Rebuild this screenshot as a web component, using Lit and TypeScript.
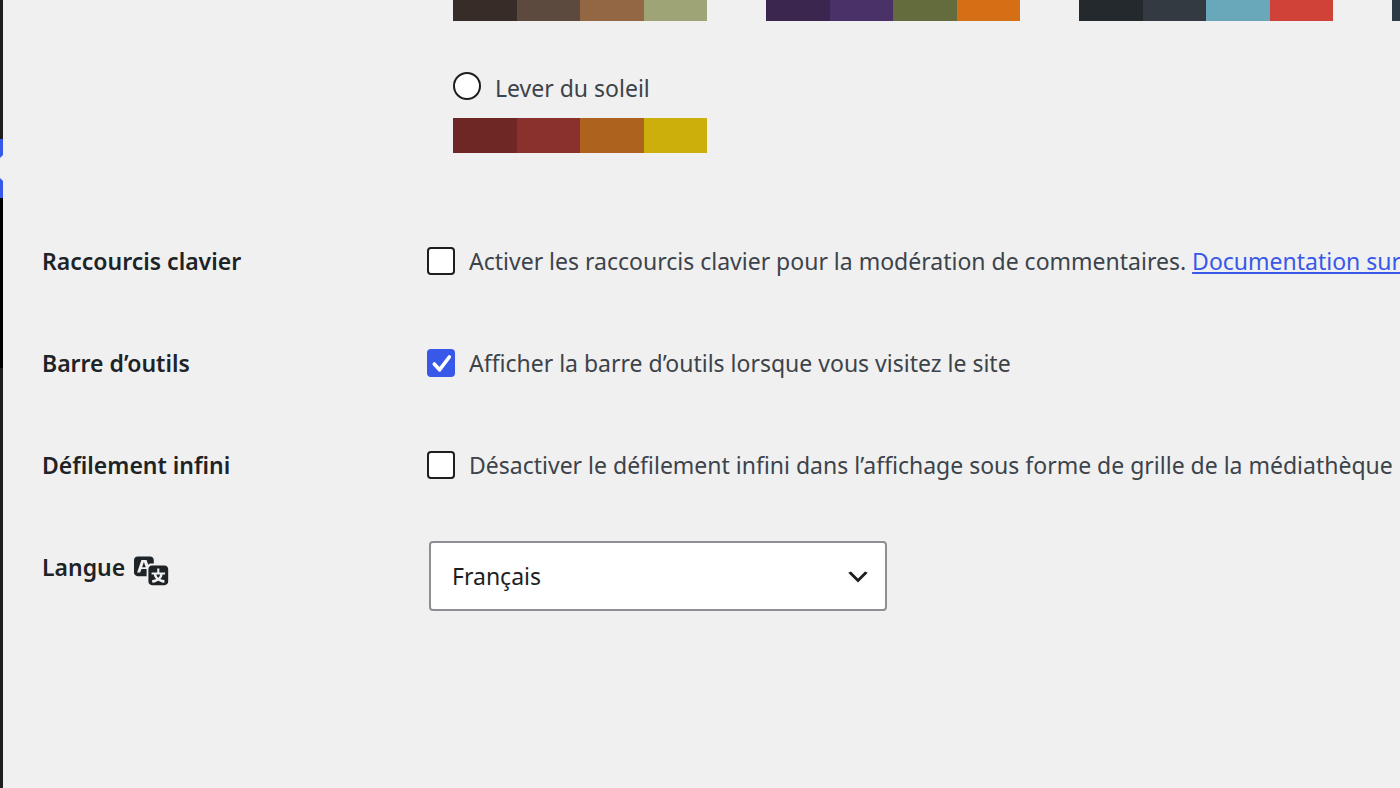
import { LitElement, html, css, svg } from "lit";
import { customElement } from "lit/decorators.js";
import { styleMap } from "lit/directives/style-map.js";

const PALETTES: string[][] = [
  ["#382c28", "#5b4a3d", "#946744", "#9ea476"],
  ["#3a264f", "#4a3268", "#646c3d", "#d46f15"],
  ["#23292c", "#333a42", "#69a7ba", "#d04238"],
  ["#2c3b45", "#738e96", "#9ebaa0", "#aa9d88"],
];
const SUNRISE = ["#6e2724", "#8a302d", "#ad621d", "#ccaf0b"];

const swatches = (colors: string[]) => html`
  <div class="palette">
    ${colors.map((c) => html`<span style=${styleMap({ backgroundColor: c })}></span>`)}
  </div>
`;

const translationIcon = svg`<path fill="currentColor" d="M11 7H9.49c-.63 0-1.25.3-1.59.7L7 5H4.13l-2.39 7h1.69l.74-2H7v4H2c-1.1 0-2-.9-2-2V5c0-1.1.9-2 2-2h7c1.1 0 2 .9 2 2v2zM6.51 9H4.49l1-2.93zM10 8h7c1.1 0 2 .9 2 2v7c0 1.1-.9 2-2 2h-7c-1.1 0-2-.9-2-2v-7c0-1.1.9-2 2-2zm7.25 5v-1.08h-3.17V9.75h-1.16v2.17H9.75V13h1.28c.11.85.56 1.85 1.28 2.62-.87.36-1.89.62-2.31.62-.01.02.22.97.2 1.46.84 0 2.21-.5 3.28-1.15 1.09.65 2.48 1.15 3.34 1.15-.02-.49.2-1.44.2-1.46-.43 0-1.49-.27-2.38-.63.7-.77 1.14-1.77 1.25-2.61h1.36zm-3.81 1.93c-.5-.46-.85-1.13-1.01-1.93h2.09c-.17.8-.51 1.47-1 1.93l-.04.03s-.03-.02-.04-.03z"/>`;

@customElement("app-root")
export class AppRoot extends LitElement {
  static styles = css`
    :host {
      display: flex;
      height: 100vh;
      overflow: hidden;
      background: #f0f0f0;
      color: #3c434a;
      font: 23px/36px "Noto Sans", "Open Sans", sans-serif;
    }
    * {
      box-sizing: border-box;
    }
    .menu {
      flex: none;
      width: 3px;
      display: flex;
      flex-direction: column;
      background: #1e1e1e;
    }
    .menu-top {
      height: 139px;
    }
    .menu-current {
      position: relative;
      height: 59px;
      background: #3858e9;
    }
    .menu-current svg {
      position: absolute;
      top: 16px;
      right: 0;
      width: 3px;
      height: 26px;
    }
    .submenu {
      height: 170px;
      background: #000;
    }
    .content {
      flex: 1;
      min-width: 0;
      padding-left: 39px;
      white-space: nowrap;
    }
    .schemes {
      padding-left: 411px;
      margin-top: -14px;
      display: flex;
      flex-direction: column;
      gap: 49px;
    }
    .scheme-row {
      display: flex;
      gap: 59px;
    }
    .palette {
      flex: none;
      width: 254px;
      height: 35px;
      display: grid;
      grid-template-columns: repeat(4, 1fr);
    }
    .scheme {
      display: flex;
      flex-direction: column;
      gap: 12px;
    }
    .option {
      display: flex;
      align-items: center;
      gap: 14px;
    }
    .scheme .option {
      align-items: flex-start;
    }
    .tick {
      position: relative;
      flex: none;
      width: 28px;
      height: 28px;
    }
    .tick svg {
      position: absolute;
      inset: 0;
      pointer-events: none;
    }
    input {
      appearance: none;
      display: block;
      flex: none;
      width: 28px;
      height: 28px;
      margin: 0;
      border: 2px solid #1e1e1e;
      border-radius: 4px;
      background: #fff;
    }
    input[type="radio"] {
      margin-top: 2px;
      border-radius: 50%;
    }
    input:checked {
      background: #3858e9;
      border-color: #3858e9;
    }
    .rows {
      display: grid;
      grid-template-columns: 385px 1fr;
      row-gap: 66px;
      margin-top: 90px;
    }
    .heading {
      color: #1d2327;
      font-weight: 600;
    }
    .heading label {
      display: flex;
      gap: 9px;
    }
    .heading svg {
      flex: none;
      width: 36px;
      height: 36px;
      margin-top: 2px;
    }
    a {
      color: #3858e9;
      text-decoration-thickness: 2px;
      text-underline-offset: 2px;
    }
    .language {
      position: relative;
      width: 458px;
      margin: -8px 0 0 2px;
    }
    select {
      appearance: none;
      display: block;
      width: 100%;
      height: 70px;
      padding: 0 60px 0 21px;
      border: 2px solid #8c8f94;
      border-radius: 4px;
      background: #fff;
      color: #1e1e1e;
      font: inherit;
    }
    .language svg {
      position: absolute;
      top: 22px;
      right: 15px;
      width: 28px;
      height: 28px;
      pointer-events: none;
    }
  `;

  private checkRow(id: string, title: string, text: unknown, checked = false) {
    return html`
      <div class="heading">${title}</div>
      <div class="option">
        <span class="tick">
          <input type="checkbox" id=${id} .checked=${checked} />
          ${checked
            ? html`<svg viewBox="0 0 28 28" aria-hidden="true">
                <path
                  d="M7.3 15l5.2 5.8L22.3 8"
                  fill="none"
                  stroke="#fff"
                  stroke-width="3.6"
                  stroke-linecap="round"
                  stroke-linejoin="round"
                />
              </svg>`
            : ""}
        </span>
        <span>${text}</span>
      </div>
    `;
  }

  render() {
    return html`
      <nav class="menu">
        <div class="menu-top"></div>
        <div class="menu-current">
          <svg viewBox="0 0 3 26" aria-hidden="true">
            <path d="M3 0L0 3v20l3 3z" fill="#f0f0f0" />
          </svg>
        </div>
        <div class="submenu"></div>
      </nav>
      <main class="content">
        <div class="schemes">
          <div class="scheme-row">${PALETTES.map(swatches)}</div>
          <div class="scheme">
            <div class="option">
              <input type="radio" id="sunrise" name="scheme" />
              <label for="sunrise">Lever du soleil</label>
            </div>
            ${swatches(SUNRISE)}
          </div>
        </div>
        <div class="rows">
          ${this.checkRow(
            "shortcuts",
            "Raccourcis clavier",
            html`<label for="shortcuts"
                >Activer les raccourcis clavier pour la modération de commentaires.</label
              >
              <a href="#docs">Documentation sur</a>`
          )}
          ${this.checkRow(
            "toolbar",
            "Barre d’outils",
            html`<label for="toolbar">Afficher la barre d’outils lorsque vous visitez le site</label>`,
            true
          )}
          ${this.checkRow(
            "scroll",
            "Défilement infini",
            html`<label for="scroll"
              >Désactiver le défilement infini dans l’affichage sous forme de grille de la médiathèque</label
            >`
          )}
          <div class="heading">
            <label for="locale"
              >Langue <svg viewBox="0 0 20 20" aria-hidden="true">${translationIcon}</svg></label
            >
          </div>
          <div class="language">
            <select id="locale">
              <option>Français</option>
            </select>
            <svg viewBox="0 0 20 20" aria-hidden="true">
              <path d="M5 6l5 5 5-5 2 1-7 7-7-7 2-1z" fill="#1e1e1e" />
            </svg>
          </div>
        </div>
      </main>
    `;
  }
}
